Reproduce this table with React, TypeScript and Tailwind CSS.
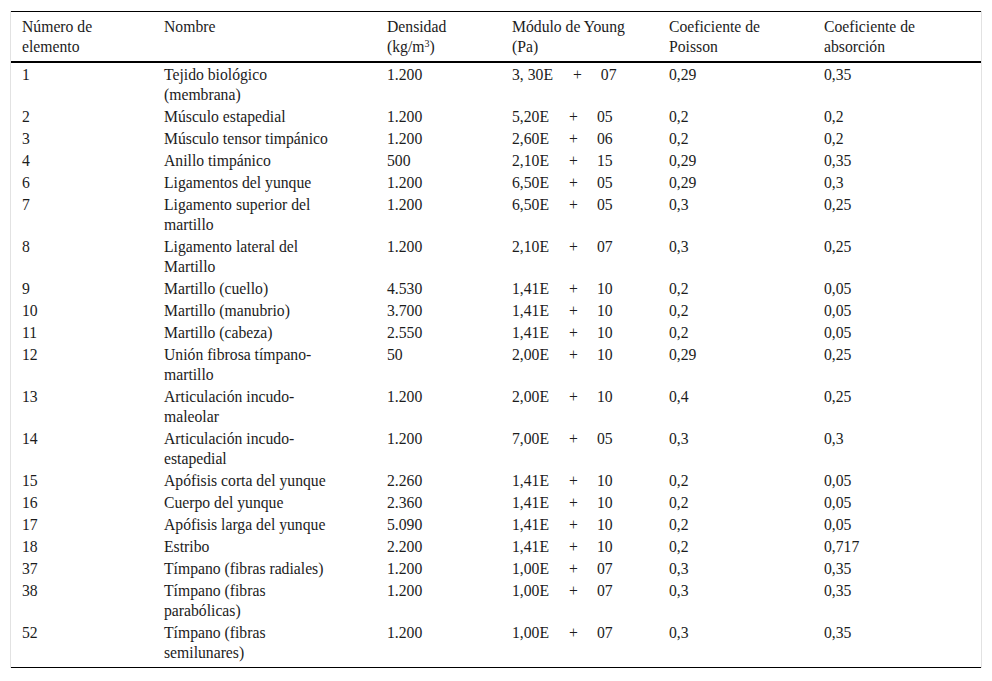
import { Fragment } from "react";

type Row = {
  n: string;
  name: string[];
  dens: string;
  mant: string;
  exp: string;
  poisson: string;
  abs: string;
};

const rows: Row[] = [
  { n: "1", name: ["Tejido biológico", "(membrana)"], dens: "1.200", mant: "3, 30E", exp: "07", poisson: "0,29", abs: "0,35" },
  { n: "2", name: ["Músculo estapedial"], dens: "1.200", mant: "5,20E", exp: "05", poisson: "0,2", abs: "0,2" },
  { n: "3", name: ["Músculo tensor timpánico"], dens: "1.200", mant: "2,60E", exp: "06", poisson: "0,2", abs: "0,2" },
  { n: "4", name: ["Anillo timpánico"], dens: "500", mant: "2,10E", exp: "15", poisson: "0,29", abs: "0,35" },
  { n: "6", name: ["Ligamentos del yunque"], dens: "1.200", mant: "6,50E", exp: "05", poisson: "0,29", abs: "0,3" },
  { n: "7", name: ["Ligamento superior del", "martillo"], dens: "1.200", mant: "6,50E", exp: "05", poisson: "0,3", abs: "0,25" },
  { n: "8", name: ["Ligamento lateral del", "Martillo"], dens: "1.200", mant: "2,10E", exp: "07", poisson: "0,3", abs: "0,25" },
  { n: "9", name: ["Martillo (cuello)"], dens: "4.530", mant: "1,41E", exp: "10", poisson: "0,2", abs: "0,05" },
  { n: "10", name: ["Martillo (manubrio)"], dens: "3.700", mant: "1,41E", exp: "10", poisson: "0,2", abs: "0,05" },
  { n: "11", name: ["Martillo (cabeza)"], dens: "2.550", mant: "1,41E", exp: "10", poisson: "0,2", abs: "0,05" },
  { n: "12", name: ["Unión fibrosa tímpano-", "martillo"], dens: "50", mant: "2,00E", exp: "10", poisson: "0,29", abs: "0,25" },
  { n: "13", name: ["Articulación incudo-", "maleolar"], dens: "1.200", mant: "2,00E", exp: "10", poisson: "0,4", abs: "0,25" },
  { n: "14", name: ["Articulación incudo-", "estapedial"], dens: "1.200", mant: "7,00E", exp: "05", poisson: "0,3", abs: "0,3" },
  { n: "15", name: ["Apófisis corta del yunque"], dens: "2.260", mant: "1,41E", exp: "10", poisson: "0,2", abs: "0,05" },
  { n: "16", name: ["Cuerpo del yunque"], dens: "2.360", mant: "1,41E", exp: "10", poisson: "0,2", abs: "0,05" },
  { n: "17", name: ["Apófisis larga del yunque"], dens: "5.090", mant: "1,41E", exp: "10", poisson: "0,2", abs: "0,05" },
  { n: "18", name: ["Estribo"], dens: "2.200", mant: "1,41E", exp: "10", poisson: "0,2", abs: "0,717" },
  { n: "37", name: ["Tímpano (fibras radiales)"], dens: "1.200", mant: "1,00E", exp: "07", poisson: "0,3", abs: "0,35" },
  { n: "38", name: ["Tímpano (fibras", "parabólicas)"], dens: "1.200", mant: "1,00E", exp: "07", poisson: "0,3", abs: "0,35" },
  { n: "52", name: ["Tímpano (fibras", "semilunares)"], dens: "1.200", mant: "1,00E", exp: "07", poisson: "0,3", abs: "0,35" },
];

const th = "pl-[11px] pr-2 pt-[5px] pb-[4px] text-left font-normal align-top";

const App = () => {
  return (
    <div className="min-h-[681px] bg-white pt-[11px] font-['Liberation_Serif','Times_New_Roman',serif] text-[15.7px] leading-[20px] text-[#1c1c1c]">
      <div className="mx-[10px] w-[972px] border-x border-[#e2e2e2]">
        <table className="w-full table-fixed border-collapse">
          <colgroup>
            <col className="w-[142px]" />
            <col className="w-[223px]" />
            <col className="w-[125px]" />
            <col className="w-[157px]" />
            <col className="w-[155px]" />
            <col />
          </colgroup>
          <thead>
            <tr className="border-t border-b-2 border-t-black border-b-black">
              <th className={th}>Número de<br />elemento</th>
              <th className={th}>Nombre</th>
              <th className={th}>
                Densidad
                <br />
                (kg/m<sup className="text-[10px]">3</sup>)
              </th>
              <th className={th}>Módulo de Young<br />(Pa)</th>
              <th className={th}>Coeficiente de<br />Poisson</th>
              <th className={th}>Coeficiente de<br />absorción</th>
            </tr>
          </thead>
          <tbody>
            {rows.map((r, i) => {
              const last = i === rows.length - 1;
              const td = last
                ? "pl-[11px] pr-2 pt-[2px] pb-[4px] align-top"
                : "pl-[11px] pr-2 pt-[2px] pb-0 align-top";
              return (
                <tr key={r.n} className={last ? "border-b border-black" : ""}>
                  <td className={td}>{r.n}</td>
                  <td className={td}>
                    {r.name.map((l, j) => (
                      <Fragment key={j}>
                        {j > 0 && <br />}
                        {l}
                      </Fragment>
                    ))}
                  </td>
                  <td className={td}>{r.dens}</td>
                  <td className={td + " whitespace-pre"}>
                    <span>{r.mant}</span>
                    <span className="ml-[20px]">+</span>
                    <span className="ml-[19px]">{r.exp}</span>
                  </td>
                  <td className={td}>{r.poisson}</td>
                  <td className={td}>{r.abs}</td>
                </tr>
              );
            })}
          </tbody>
        </table>
      </div>
    </div>
  );
};

export default App;
